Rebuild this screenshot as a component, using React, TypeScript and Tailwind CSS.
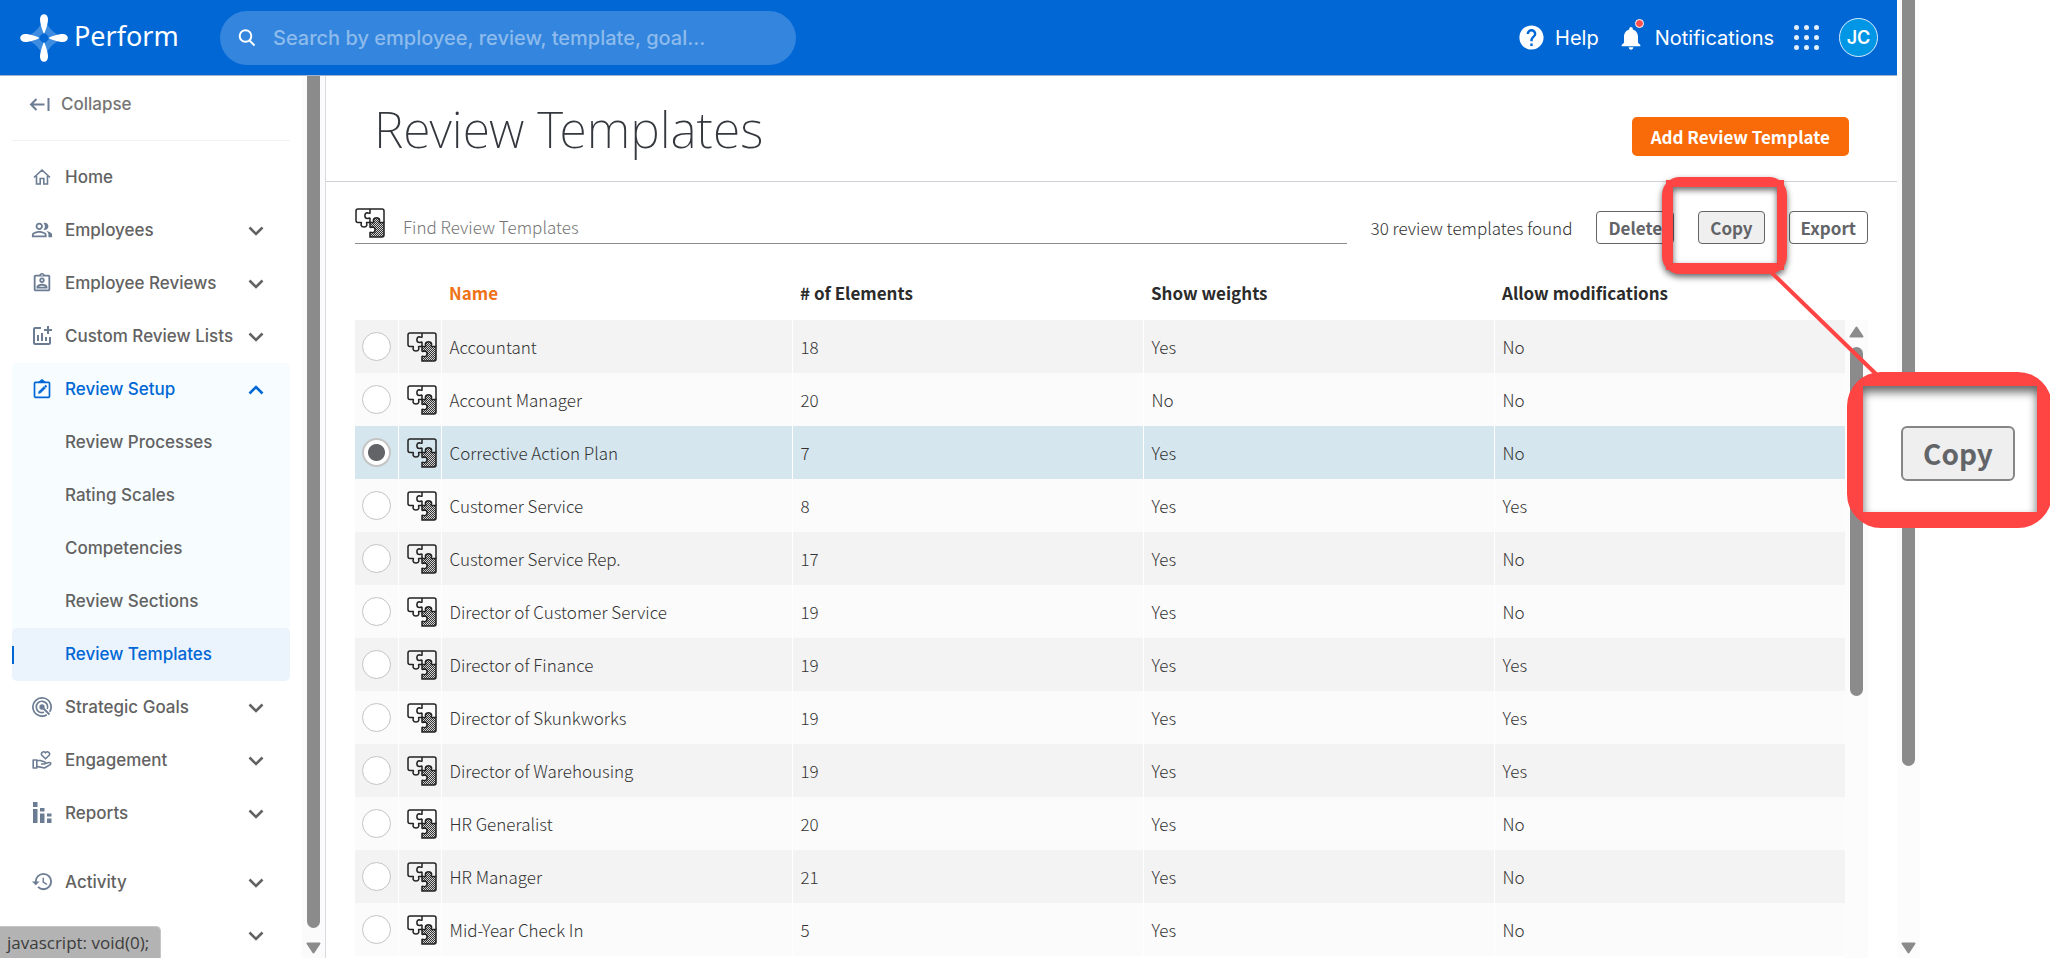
import type { ReactNode } from "react";
import {
  MdAddchart,
  MdHelp,
  MdHistory,
  MdNotifications,
  MdOutlineAssignmentInd,
  MdOutlinePeopleAlt,
} from "react-icons/md";

const ui = 'font-["Inter",sans-serif]';
const body = 'font-["Noto_Sans_CJK_SC",sans-serif]';

function HomeIcon() {
  return (
    <svg viewBox="0 0 20 20" width="20" height="20" fill="none" stroke="currentColor" strokeWidth="1.6">
      <path d="M2 10.500 10 3l8 7.500M4.500 9v8h3.700v-5.500h3.600V17h3.700V9" />
    </svg>
  );
}

function SetupIcon() {
  return (
    <svg viewBox="0 0 20 20" width="20" height="20" fill="none" stroke="currentColor" strokeWidth="1.7">
      <rect x="2.500" y="3.300" width="15" height="15" rx="1" />
      <path d="M7 3.300 10 1l3 2.300" fill="currentColor" />
      <path d="m6.500 14.500.4-2L12 7.400l1.600 1.600-5.100 5.100Z" fill="currentColor" strokeWidth=".5" />
      <path d="m13 6.400 1.600 1.600" strokeWidth="1.800" />
    </svg>
  );
}

function GoalsIcon() {
  return (
    <svg viewBox="0 0 20 20" width="20" height="20" fill="none" stroke="currentColor" strokeWidth="1.7">
      <path d="M14.800 17.700A9.100 9.100 0 1 1 17.700 14.800" />
      <path d="M12 15.300A5.700 5.700 0 1 1 15.300 12" />
      <circle cx="10" cy="10" r="1.800" fill="currentColor" />
      <path d="m10 10 7.500 7.500" strokeWidth="1.800" />
    </svg>
  );
}

function EngagementIcon() {
  return (
    <svg viewBox="0 0 20 20" width="20" height="20" fill="none" stroke="currentColor" strokeWidth="1.600" strokeLinejoin="round">
      <path d="M13.500 8.800 9.800 5.200C8.200 3.200 11.500.3 13.500 2.800 15.500.3 18.800 3.200 17.200 5.200Z" />
      <path d="M1.200 10h3.600v8H1.200zM4.800 10.500h3.500l4.600 1.600c1 .6.600 1.900-.5 1.900H9M13 13.600l4-1.100c1.500-.2 2.300 1.400 1.200 2.100L12.500 18l-7.700-1.600" />
    </svg>
  );
}

function ReportsIcon() {
  return (
    <svg viewBox="0 0 20 22" width="20" height="22" fill="currentColor">
      <path d="M1 0h4.500v5H1zM1 7h4.500v14H1zM8 6h4.500v3.500H8zM8 11.500h4.500V21H8zM15 11.500h4.500v3H15zM15 16.500h4.500V21H15z" />
    </svg>
  );
}

function CollapseIcon() {
  return (
    <svg viewBox="0 0 22 18" width="22" height="18" fill="none" stroke="#6b7c93" strokeWidth="2" className="shrink-0">
      <path d="M7.500 3 2 8.500 7.500 14M2 8.500h13.500M19.500 2v13" />
    </svg>
  );
}

function Chevron({ up = false }: { up?: boolean }) {
  return (
    <svg viewBox="0 0 16 10" width="16" height="10" fill="none" stroke="currentColor" strokeWidth="2.600">
      <path d={up ? "M1.500 8.500 8 2l6.500 6.500" : "M1.500 1.500 8 8l6.500-6.500"} />
    </svg>
  );
}

function PuzzleIcon() {
  return (
    <svg viewBox="0 0 30 30" width="30" height="30" fill="none" stroke="#222" strokeWidth="1.500" className="block shrink-0">
      <defs>
        <pattern id="hatch" width="2" height="2" patternUnits="userSpaceOnUse">
          <rect width="2" height="2" fill="#d4d4d4" stroke="none" />
          <path d="M0 0h1v1H0zM1 1h1v1H1z" fill="#333" stroke="none" />
        </pattern>
      </defs>
      <path d="M15 14.500h-3.200c-.8.500.3 1.700 0 2.700-.7 2.400-5 2.400-5.700 0-.3-1 .8-2.200 0-2.700H3a2 2 0 0 1-2-2V3a2 2 0 0 1 2-2h12" />
      <path d="M15 1v4c-.5.800-1.500-.2-2.500-.2C9 5 9 10.500 12.500 10.500c1 0 2-1 2.500-.2v4.200M15 1h12a2 2 0 0 1 2 2v11.500" />
      <path
        d="M15 14.500h3.500c.8-.5-.3-1.500-.1-2.500.6-3 5.600-3 6.200 0 .2 1-.9 2-.1 2.500H29V27a2 2 0 0 1-2 2H15v-4.500c.5-.8 1.500.2 2.500.2 3.500-.2 3.500-5.500 0-5.700-1 0-2 1-2.500.2Z"
        fill="url(#hatch)"
      />
    </svg>
  );
}

function Logo() {
  return (
    <svg viewBox="0 0 48 48" width="48" height="48">
      <path d="M24 5Q30 18 43 24 30 30 24 43 18 30 5 24 18 18 24 5Z" fill="#3d8ce0" />
      <path d="m24 18 6 6-6 6-6-6Z" fill="#0067d5" />
      <g fill="#fff">
        <path id="petal" d="M24 20C22.500 17 20 9.500 20 5.500 20 2 21.800.2 24 .2s4 1.800 4 5.300C28 9.500 25.500 17 24 20Z" />
        <use href="#petal" transform="rotate(90 24 24)" />
        <use href="#petal" transform="rotate(180 24 24)" />
        <use href="#petal" transform="rotate(270 24 24)" />
      </g>
    </svg>
  );
}

function Arrow({ up = false }: { up?: boolean }) {
  return (
    <svg viewBox="0 0 15 12" width="15" height="12" fill="#8b8b8b" stroke="#8b8b8b" strokeWidth="2" strokeLinejoin="round" className="shrink-0">
      <path d={up ? "M7.500 1.500 13.500 10.500h-12Z" : "M7.500 10.500 13.500 1.500h-12Z"} />
    </svg>
  );
}

function Header() {
  return (
    <header className="flex h-[76px] shrink-0 items-center border-b border-[#9fb3cf] bg-[#0067d5] pr-[19px] pl-5 text-white">
      <a href="#" className="flex w-[200px] items-center gap-[6px]">
        <Logo />
        <span className='pb-1 font-["Noto_Sans",sans-serif] text-[27px] leading-none'>Perform</span>
      </a>
      <label className="flex h-[54px] w-[576px] items-center gap-[17px] rounded-[27px] bg-[#3385dd] pl-[18px]">
        <svg viewBox="0 0 18 18" width="18" height="18" fill="none" stroke="#fff" strokeWidth="2">
          <circle cx="7.500" cy="7" r="5.800" />
          <path d="m11.500 11.500 5 5" />
        </svg>
        <input
          type="search"
          aria-label="Search"
          placeholder="Search by employee, review, template, goal..."
          className={`${ui} min-w-0 flex-1 bg-transparent text-[20px] font-medium outline-none placeholder:text-[#8dbbec]`}
        />
      </label>
      <div className={`${ui} ml-auto flex items-center text-[20px]`}>
        <button className="flex items-center gap-[9px]">
          <MdHelp size={29} />
          Help
        </button>
        <button className="relative ml-[18px] flex items-center gap-[10px]">
          <MdNotifications size={28} />
          <span className="absolute -top-[4px] left-[18px] size-[9px] rounded-full border border-white bg-[#ff5050]" />
          Notifications
        </button>
        <button aria-label="Apps" className="ml-[20px] grid grid-cols-3 gap-[5px]">
          {Array.from({ length: 9 }, (_, i) => (
            <span key={i} className="size-[5px] rounded-full bg-[#e3effb]" />
          ))}
        </button>
        <button className="ml-[20px] size-[39px] rounded-full border border-[#d9ecfa] bg-[#0096e6] text-[18px] font-semibold">
          JC
        </button>
      </div>
    </header>
  );
}

function NavItem({ icon, label, open, leaf }: { icon: ReactNode; label: string; open?: boolean; leaf?: boolean }) {
  return (
    <button
      className={`flex h-[53px] w-full items-center gap-[11px] pr-[26px] pl-[18px] text-left ${open ? "text-[#0067d5]" : "text-[#626262]"}`}
    >
      <span className={`flex w-6 shrink-0 justify-center pb-[2px] ${open ? "" : "text-[#6b7c93]"}`}>{icon}</span>
      <span className="flex-1 whitespace-nowrap">{label}</span>
      {!leaf && <Chevron up={open} />}
    </button>
  );
}

function Sidebar() {
  return (
    <aside className="flex w-[326px] shrink-0 overflow-hidden border-r border-[#d9dadf]">
      <nav className={`${ui} flex-1 px-3 text-[17px] font-medium`}>
        <button className="flex h-[65px] w-full items-center gap-[10px] border-b border-[#f2f2f2] pb-[7px] pl-[17px] text-[#757575]">
          <CollapseIcon />
          Collapse
        </button>
        <div className="pt-[10px]">
          <NavItem icon={<HomeIcon />} label="Home" leaf />
          <NavItem icon={<MdOutlinePeopleAlt size={22} />} label="Employees" />
          <NavItem icon={<MdOutlineAssignmentInd size={22} />} label="Employee Reviews" />
          <NavItem icon={<MdAddchart size={24} />} label="Custom Review Lists" />
          <div className="rounded-[5px] bg-[#f7fcff]">
            <NavItem icon={<SetupIcon />} label="Review Setup" open />
            {["Review Processes", "Rating Scales", "Competencies", "Review Sections"].map((label) => (
              <a key={label} href="#" className="flex h-[53px] items-center pl-[53px] text-[#626262]">
                {label}
              </a>
            ))}
            <a href="#" className="flex h-[53px] items-center rounded-[5px] bg-[#ebf3fd] text-[#0067d5]">
              <span className="mr-[51px] h-[18px] w-[2px] bg-[#0067d5]" />
              Review Templates
            </a>
          </div>
          <NavItem icon={<GoalsIcon />} label="Strategic Goals" />
          <NavItem icon={<EngagementIcon />} label="Engagement" />
          <NavItem icon={<ReportsIcon />} label="Reports" />
          <div className="pt-4">
            <NavItem icon={<MdHistory size={23} />} label="Activity" />
            <NavItem icon={null} label="" />
          </div>
        </div>
      </nav>
      <div className="flex w-[23px] flex-col items-center bg-[#fbfbfb] pb-[4px]">
        <div className="w-[13px] flex-1 rounded-b-full bg-[#8b8b8b]" />
        <div className="h-[14px]" />
        <Arrow />
      </div>
    </aside>
  );
}

const rows: [string, number, string, string][] = [
  ["Accountant", 18, "Yes", "No"],
  ["Account Manager", 20, "No", "No"],
  ["Corrective Action Plan", 7, "Yes", "No"],
  ["Customer Service", 8, "Yes", "Yes"],
  ["Customer Service Rep.", 17, "Yes", "No"],
  ["Director of Customer Service", 19, "Yes", "No"],
  ["Director of Finance", 19, "Yes", "Yes"],
  ["Director of Skunkworks", 19, "Yes", "Yes"],
  ["Director of Warehousing", 19, "Yes", "Yes"],
  ["HR Generalist", 20, "Yes", "No"],
  ["HR Manager", 21, "Yes", "No"],
  ["Mid-Year Check In", 5, "Yes", "No"],
];

const selected = "Corrective Action Plan";

function TemplateTable() {
  return (
    <div className="mt-[24px] flex min-h-0 flex-1 overflow-hidden">
      <div className="min-w-0 flex-1">
        <table className="w-full table-fixed border-collapse text-left text-[17px] leading-[24px]">
          <colgroup>
            <col className="w-[43px]" />
            <col className="w-[43px]" />
            <col />
            <col />
            <col />
            <col />
          </colgroup>
          <thead>
            <tr className="h-[52px] text-[#2b2b2b]">
              <th />
              <th />
              <th className="px-2 pb-[2px] font-bold text-[#ee7219]">Name</th>
              <th className="px-2 pb-[2px] font-bold"># of Elements</th>
              <th className="px-2 pb-[2px] font-bold">Show weights</th>
              <th className="px-2 pb-[2px] font-bold">Allow modifications</th>
            </tr>
          </thead>
          <tbody>
            {rows.map(([name, count, weights, mods], i) => (
              <tr
                key={name}
                className={`h-[53px] font-light text-[#333] ${name === selected ? "bg-[#d5e6ee]" : i % 2 ? "bg-[#fbfbfb]" : "bg-[#f3f3f3]"}`}
              >
                <td className="p-0">
                  <input
                    type="radio"
                    name="template"
                    aria-label={name}
                    defaultChecked={name === selected}
                    className="mx-auto block size-[29px] appearance-none rounded-full border border-[#c4c4c4] bg-white checked:border-2 checked:bg-[radial-gradient(circle,#626468_0_8px,#fff_9px)]"
                  />
                </td>
                <td className="border-l border-white p-0 pl-[8px]">
                  <PuzzleIcon />
                </td>
                <td className="border-l border-white px-2">{name}</td>
                <td className="border-l border-white px-2">{count}</td>
                <td className="border-l border-white px-2">{weights}</td>
                <td className="border-l border-white px-2">{mods}</td>
              </tr>
            ))}
          </tbody>
        </table>
      </div>
      <div className="mt-[52px] flex w-[23px] shrink-0 flex-col items-center bg-[#fcfcfc] pt-[6px]">
        <Arrow up />
        <div className="mt-[9px] h-[349px] w-[13px] rounded-full bg-[#8b8b8b]" />
      </div>
    </div>
  );
}

const outlineButton =
  "h-[33px] rounded-[4px] border border-[#626468] px-[11px] text-[17px] leading-none font-bold text-[#626468]";

function Main() {
  return (
    <main className={`${body} flex min-w-0 flex-1 flex-col`}>
      <div className="flex h-[106px] shrink-0 items-center justify-between border-b border-[#cfcfd6] px-[48px]">
        <h1 className='font-["Noto_Sans",sans-serif] text-[50px] leading-none font-extralight text-[#34383e]'>
          Review Templates
        </h1>
        <button className="mt-[15px] h-[39px] rounded-[5px] bg-[#f96a08] px-[19px] text-[17px] leading-none font-bold text-white">
          Add Review Template
        </button>
      </div>
      <div className="flex min-h-0 flex-1 flex-col px-[29px]">
        <div className="flex h-[62px] shrink-0 items-end">
          <label className="flex h-[36px] flex-1 items-start gap-[18px] border-b border-[#8b8b8b]">
            <PuzzleIcon />
            <input
              type="text"
              aria-label="Find Review Templates"
              placeholder="Find Review Templates"
              className="h-[36px] flex-1 bg-transparent text-[17px] font-light outline-none placeholder:text-[#757575]"
            />
          </label>
          <p className="mx-[24px] text-[17px] leading-[33px] font-light text-[#333]">30 review templates found</p>
          <button className={outlineButton}>Delete</button>
          <button className={`${outlineButton} ml-[24px] bg-[#efefef]`}>Copy</button>
          <button className={`${outlineButton} ml-[24px]`}>Export</button>
        </div>
        <TemplateTable />
      </div>
    </main>
  );
}

function Callout() {
  return (
    <div className="pointer-events-none absolute top-[165px] right-0 h-[380px] w-[400px] overflow-hidden">
      <div
        aria-hidden="true"
        className="absolute top-[221px] right-[13px] flex h-[126px] w-[174px] items-center justify-end bg-white pt-[9px] pr-[22px] shadow-[inset_0_6px_10px_rgba(0,0,0,0.6)]"
      >
        <span
          className={`${body} flex h-[55px] w-[114px] items-center justify-center rounded-[6px] border-2 border-[#868686] bg-[#efefef] pb-[2px] text-[28px] leading-none font-bold text-[#626468]`}
        >
          Copy
        </span>
      </div>
      <svg viewBox="0 0 400 380" width="400" height="380" className="absolute inset-0">
        <g fill="#ff4444" fillRule="evenodd" className="drop-shadow-[0_3px_3px_rgba(0,0,0,0.6)]">
          <path d="M30 12h89a18 18 0 0 1 18 18v61a18 18 0 0 1-18 18H30a18 18 0 0 1-18-18V30a18 18 0 0 1 18-18ZM23 22v76h104V22Z" />
          <path d="M16 15h118v90H16ZM23 22v76h104V22Z" />
        </g>
        <path
          d="M231 207h137a34 34 0 0 1 34 34v88a34 34 0 0 1-34 34H231a34 34 0 0 1-34-34v-88a34 34 0 0 1 34-34ZM213 221v126h174V221Z"
          fill="#ff4444"
          fillRule="evenodd"
        />
        <path d="M121 107 226 209" stroke="#ff4444" strokeWidth="4" />
      </svg>
    </div>
  );
}

export default function App() {
  return (
    <div className="relative flex h-screen overflow-hidden bg-white">
      <div className="flex min-w-0 flex-1 flex-col">
        <Header />
        <div className="flex min-h-0 flex-1">
          <Sidebar />
          <Main />
        </div>
      </div>
      <div className="mr-[130px] flex w-[23px] shrink-0 flex-col items-center justify-between bg-[#fcfcfc]">
        <div className="h-4/5 w-[13px] rounded-b-full bg-[#8b8b8b]" />
        <div className="pb-[4px]">
          <Arrow />
        </div>
      </div>
      <Callout />
      <div className='absolute bottom-0 left-0 flex h-[32px] items-center rounded-tr-[5px] border-t border-r border-[#c6c6c6] bg-[#b3b3b3] pr-[11px] pl-[7px] font-["Open_Sans",sans-serif] text-[17px] text-[#3c3c3c]'>
        javascript: void(0);
      </div>
    </div>
  );
}
